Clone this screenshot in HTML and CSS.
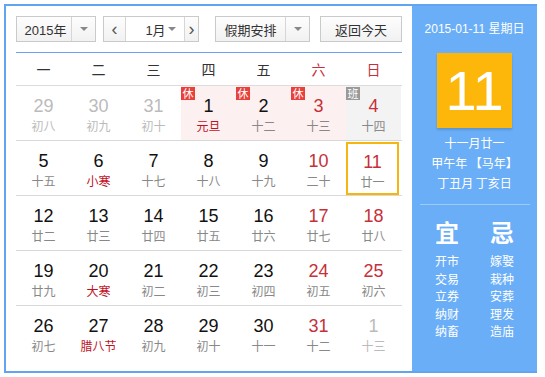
FILE: index.html
```html
<!DOCTYPE html>
<html>
<head>
    <title>万年历</title>
    <link rel="stylesheet" href="styles.css">
</head>
    <body>
        <div class="calendar">
            <div class="main">
                <div class="toolbar">
                    <div class="select year-select">
                        <span class="select-text">2015年</span>
                        <span class="select-arrow"><i class="caret"></i></span>
                    </div>
                    <div class="month-group">
                        <span class="nav-btn prev">&lsaquo;</span>
                        <div class="month-select">
                            <span class="select-text">1月</span>
                            <i class="caret"></i>
                        </div>
                        <span class="nav-btn next">&rsaquo;</span>
                    </div>
                    <div class="select holiday-select">
                        <span class="select-text">假期安排</span>
                        <span class="select-arrow"><i class="caret"></i></span>
                    </div>
                    <div class="today-btn">返回今天</div>
                </div>

                <div class="weekdays">
                    <span>一</span><span>二</span><span>三</span><span>四</span><span>五</span>
                    <span class="weekend">六</span><span class="weekend">日</span>
                </div>

                <div class="days">
                    <div class="row">
                        <div class="day other"><b>29</b><em>初八</em></div>
                        <div class="day other"><b>30</b><em>初九</em></div>
                        <div class="day other"><b>31</b><em>初十</em></div>
                        <div class="day rest"><span class="badge">休</span><b>1</b><em class="fest">元旦</em></div>
                        <div class="day rest"><span class="badge">休</span><b>2</b><em>十二</em></div>
                        <div class="day rest red"><span class="badge">休</span><b>3</b><em>十三</em></div>
                        <div class="day work red"><span class="badge">班</span><b>4</b><em>十四</em></div>
                    </div>
                    <div class="row">
                        <div class="day"><b>5</b><em>十五</em></div>
                        <div class="day"><b>6</b><em class="fest">小寒</em></div>
                        <div class="day"><b>7</b><em>十七</em></div>
                        <div class="day"><b>8</b><em>十八</em></div>
                        <div class="day"><b>9</b><em>十九</em></div>
                        <div class="day red"><b>10</b><em>二十</em></div>
                        <div class="day red today"><b>11</b><em>廿一</em></div>
                    </div>
                    <div class="row">
                        <div class="day"><b>12</b><em>廿二</em></div>
                        <div class="day"><b>13</b><em>廿三</em></div>
                        <div class="day"><b>14</b><em>廿四</em></div>
                        <div class="day"><b>15</b><em>廿五</em></div>
                        <div class="day"><b>16</b><em>廿六</em></div>
                        <div class="day red"><b>17</b><em>廿七</em></div>
                        <div class="day red"><b>18</b><em>廿八</em></div>
                    </div>
                    <div class="row">
                        <div class="day"><b>19</b><em>廿九</em></div>
                        <div class="day"><b>20</b><em class="fest">大寒</em></div>
                        <div class="day"><b>21</b><em>初二</em></div>
                        <div class="day"><b>22</b><em>初三</em></div>
                        <div class="day"><b>23</b><em>初四</em></div>
                        <div class="day red"><b>24</b><em>初五</em></div>
                        <div class="day red"><b>25</b><em>初六</em></div>
                    </div>
                    <div class="row">
                        <div class="day"><b>26</b><em>初七</em></div>
                        <div class="day"><b>27</b><em class="fest">腊八节</em></div>
                        <div class="day"><b>28</b><em>初九</em></div>
                        <div class="day"><b>29</b><em>初十</em></div>
                        <div class="day"><b>30</b><em>十一</em></div>
                        <div class="day red"><b>31</b><em>十二</em></div>
                        <div class="day other"><b>1</b><em>十三</em></div>
                    </div>
                </div>
            </div>

            <div class="side">
                <div class="side-date">2015-01-11 星期日</div>
                <div class="big-day">11</div>
                <div class="lunar">
                    <p>十一月廿一</p>
                    <p>甲午年 【马年】</p>
                    <p>丁丑月 丁亥日</p>
                </div>
                <div class="almanac">
                    <div class="almanac-col">
                        <h2>宜</h2>
                        <p>开市</p><p>交易</p><p>立券</p><p>纳财</p><p>纳畜</p>
                    </div>
                    <div class="almanac-col">
                        <h2>忌</h2>
                        <p>嫁娶</p><p>栽种</p><p>安葬</p><p>理发</p><p>造庙</p>
                    </div>
                </div>
            </div>
        </div>
    </body>
</html>
```

FILE: styles.css
```css
body {
    margin: 4px;
    font-family: "Liberation Sans", "Noto Sans CJK SC", sans-serif;
    color: #333;
}
.calendar {
    display: flex;
    width: 531px;
    height: 365px;
    border: 2px solid #62a4f0;
    border-right: none;
    background: #fff;
}
.main {
    width: 386px;
    padding: 10px 10px 0 10px;
}
.toolbar {
    display: flex;
    height: 26px;
    font-size: 13px;
}
.select,
.month-group,
.today-btn {
    display: flex;
    box-sizing: border-box;
    height: 26px;
    border: 1px solid #cacaca;
    background: linear-gradient(#fdfdfd, #f1f1f1);
}
.select-text {
    display: flex;
    align-items: center;
    justify-content: center;
    flex: 1;
}
.select-arrow {
    display: flex;
    align-items: center;
    justify-content: center;
    width: 23px;
    border-left: 1px solid #d6d6d6;
}
.caret {
    width: 0;
    height: 0;
    border-left: 4px solid transparent;
    border-right: 4px solid transparent;
    border-top: 4px solid #888;
}
.year-select {
    width: 80px;
}
.year-select .select-text {
    padding-left: 3px;
}
.month-group {
    width: 96px;
    margin-left: 7px;
}
.nav-btn {
    display: flex;
    align-items: center;
    justify-content: center;
    width: 21px;
    font-size: 18px;
    color: #555;
}
.nav-btn.next {
    width: 13px;
    border-left: 1px solid #d6d6d6;
}
.month-select {
    display: flex;
    align-items: center;
    justify-content: space-between;
    flex: 1;
    padding: 0 8px 0 17px;
    border-left: 1px solid #d6d6d6;
    background: #fff;
}
.holiday-select {
    width: 95px;
    margin-left: 16px;
}
.today-btn {
    width: 82px;
    margin-left: 10px;
    align-items: center;
    justify-content: center;
}
.weekdays {
    display: grid;
    grid-template-columns: repeat(7, 55px);
    height: 32px;
    margin-top: 10px;
    border-top: 1px solid #69a5ec;
    border-bottom: 1px solid #dcdcdc;
    font-size: 14px;
    font-family: "Noto Sans CJK SC", sans-serif;
}
.weekdays span {
    display: flex;
    align-items: center;
    justify-content: center;
}
.weekdays .weekend {
    color: #c6303a;
}
.row {
    display: grid;
    grid-template-columns: repeat(7, 55px);
    height: 54px;
    border-bottom: 1px solid #d8d8d8;
}
.row:last-child {
    border-bottom: none;
}
.day {
    position: relative;
    display: flex;
    flex-direction: column;
    align-items: center;
    box-sizing: border-box;
    padding-top: 8px;
}
.day b {
    font-size: 18px;
    line-height: 24px;
    font-weight: normal;
    color: #111;
}
.day em {
    font-style: normal;
    font-size: 12px;
    line-height: 16px;
    color: #888;
    font-family: "Noto Sans CJK SC", sans-serif;
}
.day.red b {
    color: #c6303a;
}
.day em.fest {
    color: #c0121f;
}
.day.other b,
.day.other em {
    color: #bbb;
}
.day.rest {
    background: #fdf0f0;
}
.day.work {
    background: #f3f3f3;
}
.badge {
    position: absolute;
    top: 1px;
    left: 0;
    width: 14px;
    height: 13px;
    font-size: 11px;
    line-height: 13px;
    text-align: center;
    color: #fff;
    background: #e8413b;
    font-family: "Noto Sans CJK SC", sans-serif;
}
.work .badge {
    background: #999;
}
.day.today {
    border: 2px solid #f5b70f;
    margin: 1px 2px 0 0;
    padding-top: 6px;
}
.side {
    display: flex;
    flex-direction: column;
    align-items: center;
    width: 125px;
    background: #6aaef8;
    color: #fff;
}
.side-date {
    margin-top: 16px;
    font-size: 12px;
    line-height: 14px;
}
.big-day {
    width: 75px;
    height: 75px;
    margin-top: 17px;
    background: #fdb70a;
    box-shadow: 0 2px 2px rgba(0, 0, 0, 0.15);
    font-size: 56px;
    line-height: 75px;
    text-align: center;
}
.lunar {
    margin-top: 5px;
    padding-bottom: 11px;
    width: 110px;
    border-bottom: 1px solid #9ccbf8;
    text-align: center;
    font-size: 12px;
    font-family: "Noto Sans CJK SC", sans-serif;
}
.lunar p {
    margin: 0;
    line-height: 20px;
}
.almanac {
    display: flex;
    gap: 31px;
    margin-top: 11px;
    font-family: "Noto Sans CJK SC", sans-serif;
}
.almanac-col {
    display: flex;
    flex-direction: column;
    align-items: center;
}
.almanac-col h2 {
    margin: 0 0 4px;
    font-size: 24px;
    line-height: 32px;
    font-weight: bold;
}
.almanac-col p {
    margin: 0;
    font-size: 12px;
    line-height: 17.5px;
}
```
